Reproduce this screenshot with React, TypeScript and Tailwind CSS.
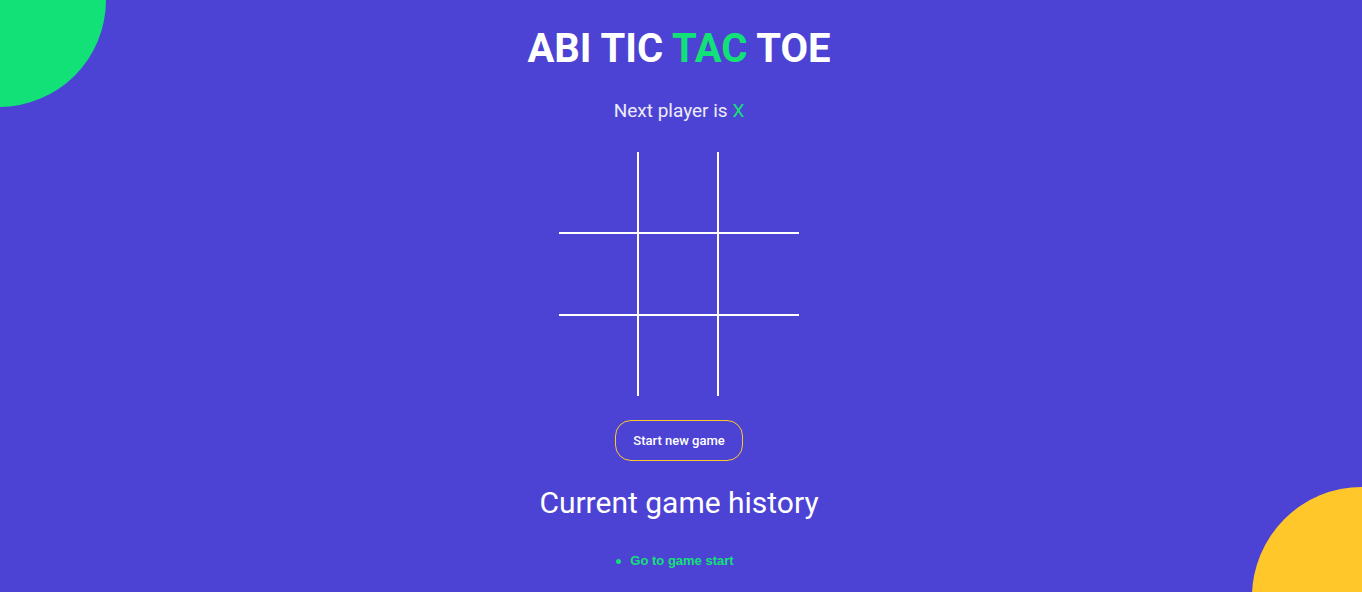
import { useState } from 'react';

type Mark = 'X' | 'O' | null;

const cellBorders = [
  'border-r-2 border-b-2',
  'border-r-2 border-b-2',
  'border-b-2',
  'border-r-2 border-b-2',
  'border-r-2 border-b-2',
  'border-b-2',
  'border-r-2',
  'border-r-2',
  '',
];

export default function App() {
  const [cells, setCells] = useState<Mark[]>(Array(9).fill(null));
  const next = cells.filter(Boolean).length % 2 === 0 ? 'X' : 'O';
  const reset = () => setCells(Array(9).fill(null));
  const play = (index: number) => {
    if (cells[index]) return;
    setCells(cells.map((cell, i) => (i === index ? next : cell)));
  };

  return (
    <div className="relative min-h-screen overflow-hidden bg-[#4c43d4] font-['Roboto',sans-serif] text-white">
      <div className="absolute -top-[107px] -left-[108px] size-[214px] rounded-full bg-[#12e177]" />
      <div className="absolute -right-[110px] -bottom-[115px] size-[220px] rounded-full bg-[#ffc72a]" />
      <main className="relative flex flex-col items-center pt-[25px] pr-1">
        <h1 className="text-[40px] leading-12 font-bold">
          ABI TIC <span className="text-[#12e177]">TAC</span> TOE
        </h1>
        <h2 className="mt-6 text-[19px] leading-7 font-normal text-white/90">
          Next player is <span className="text-[#12e177]">{next}</span>
        </h2>
        <div className="mt-[27px] grid grid-cols-[80px_80px_80px] grid-rows-[82px_82px_80px]">
          {cells.map((cell, i) => (
            <button
              key={i}
              type="button"
              aria-label={`Square ${i + 1}`}
              onClick={() => play(i)}
              className={`border-white text-[40px] ${cellBorders[i]}`}
            >
              {cell}
            </button>
          ))}
        </div>
        <button
          type="button"
          onClick={reset}
          className="mt-6 h-[41px] w-32 rounded-2xl border border-[#ffc72a] text-[13px] font-medium"
        >
          Start new game
        </button>
        <h2 className="mt-6 text-[30px] leading-9 font-normal">Current game history</h2>
        <ul className="mt-7 pr-2 text-[13px] leading-6 text-[#12e177]">
          <li className="flex items-center gap-[9px]">
            <span className="size-[5px] rounded-full bg-[#12e177]" />
            <button type="button" onClick={reset} className="font-['Liberation_Sans',sans-serif] font-bold">
              Go to game start
            </button>
          </li>
        </ul>
      </main>
    </div>
  );
}
